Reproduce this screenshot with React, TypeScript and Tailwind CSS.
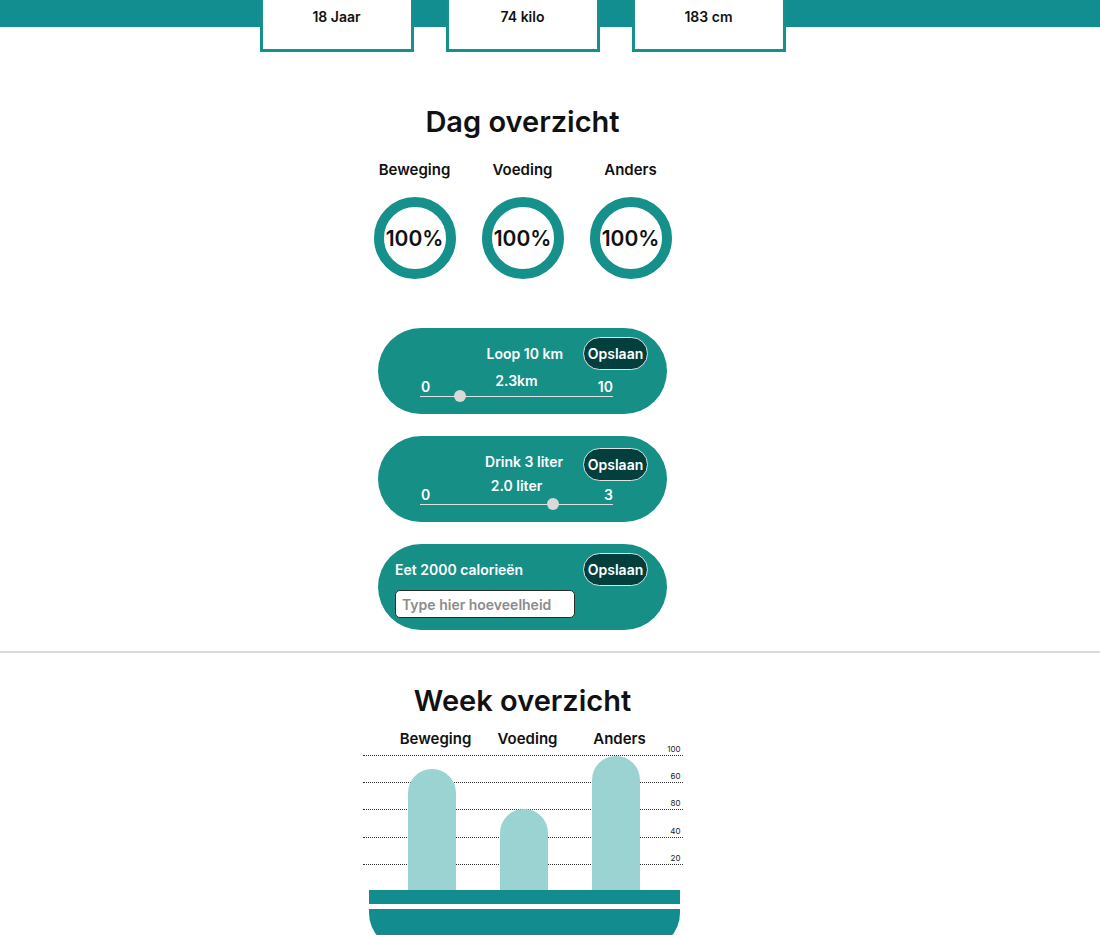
import React from "react";

const font = { fontFamily: "Inter, 'Noto Sans', sans-serif" };

function StatBox({ label }: { label: string }) {
  return (
    <div className="flex h-[52px] w-[154px] justify-center border-x-[3px] border-b-[3px] border-[#16908f] bg-white pt-[7px] text-sm leading-5 font-semibold text-[#111]">
      {label}
    </div>
  );
}

function Ring({ label }: { label: string }) {
  return (
    <div className="flex w-[82px] flex-col items-center">
      <div className="text-[15px] leading-5 font-semibold whitespace-nowrap text-[#111]">{label}</div>
      <div className="mt-[17px] flex h-[82px] w-[82px] items-center justify-center rounded-full border-[10px] border-[#16908a]">
        <span className="text-[21px] leading-none font-semibold text-[#111]">100%</span>
      </div>
    </div>
  );
}

function SaveButton() {
  return (
    <button className="flex h-[33px] w-[65px] shrink-0 items-center justify-center rounded-full border border-[#d8e6e4] bg-[#033f3d] text-sm font-semibold text-white">
      Opslaan
    </button>
  );
}

function SliderCard({
  title,
  value,
  max,
  frac,
  pt,
  titleShift,
  valueGap,
  rowGap,
}: {
  title: string;
  value: string;
  max: string;
  frac: number;
  pt: string;
  titleShift: string;
  valueGap: string;
  rowGap: string;
}) {
  return (
    <div className={`h-[86px] w-[289px] rounded-full bg-[#168f87] pr-[19px] pl-[42px] text-white ${pt}`}>
      <div className="flex items-center justify-end gap-5">
        <span className={`text-sm font-semibold whitespace-nowrap ${titleShift}`}>{title}</span>
        <SaveButton />
      </div>
      <div className={`w-[193px] ${valueGap}`}>
        <div className="text-center text-sm leading-[18px] font-semibold">{value}</div>
        <div className={`flex justify-between text-sm leading-[18px] font-semibold ${rowGap}`}>
          <span className="pl-[1px]">0</span>
          <span>{max}</span>
        </div>
        <div className="relative h-px bg-[#d9e3e1]">
          <div
            className="absolute top-[-6px] h-[12px] w-[12px] -translate-x-1/2 rounded-full bg-[#d9d9d9]"
            style={{ left: `${frac * 100}%` }}
          />
        </div>
      </div>
    </div>
  );
}

function InputCard() {
  return (
    <div className="h-[86px] w-[289px] rounded-full bg-[#168f87] pt-[9px] pr-[19px] pl-[17px] text-white">
      <div className="flex items-center justify-between">
        <span className="text-sm font-semibold">Eet 2000 calorieën</span>
        <SaveButton />
      </div>
      <input
        className="mt-[4px] h-[28px] w-[180px] rounded-[5px] border border-[#2b2b2b] bg-white px-[6px] text-sm font-semibold text-[#111] placeholder:text-[#8c8c8c]"
        style={font}
        placeholder="Type hier hoeveelheid"
      />
    </div>
  );
}

const gridLines = [
  { label: "100", top: "top-[6px]" },
  { label: "60", top: "top-[33px]" },
  { label: "80", top: "top-[60px]" },
  { label: "40", top: "top-[88px]" },
  { label: "20", top: "top-[115px]" },
];

const bars = [
  { label: "Beweging", h: "h-[121px]" },
  { label: "Voeding", h: "h-[81px]" },
  { label: "Anders", h: "h-[134px]" },
];

export default function App() {
  return (
    <div className="min-h-[935px] bg-white" style={font}>
      {/* Header */}
      <div className="h-[27px] bg-[#128e91]" />
      <div className="-mt-[27px] pr-[55px]">
        <div className="flex justify-center gap-8">
          <StatBox label="18 Jaar" />
          <StatBox label="74 kilo" />
          <StatBox label="183 cm" />
        </div>

        {/* Dag overzicht */}
        <h1 className="mt-[53px] text-center text-[29px] leading-[34px] font-semibold text-[#111]">Dag overzicht</h1>
        <div className="mt-[21px] flex justify-center gap-[26px]">
          <Ring label="Beweging" />
          <Ring label="Voeding" />
          <Ring label="Anders" />
        </div>

        <div className="mt-[49px] flex flex-col items-center gap-[22px]">
          <SliderCard
            title="Loop 10 km"
            value="2.3km"
            max="10"
            frac={0.207}
            pt="pt-[9px]"
            titleShift=""
            valueGap="mt-[2px]"
            rowGap="-mt-[12px]"
          />
          <SliderCard
            title="Drink 3 liter"
            value="2.0 liter"
            max="3"
            frac={0.69}
            pt="pt-[12px]"
            titleShift="-translate-y-[3px]"
            valueGap="-mt-[4px]"
            rowGap="-mt-[9px]"
          />
          <InputCard />
        </div>
      </div>

      <div className="mt-[21px] h-[2px] bg-[#dadada]" />

      {/* Week overzicht */}
      <div className="pr-[55px]">
        <h2 className="mt-[31px] text-center text-[29px] leading-[34px] font-semibold text-[#111]">Week overzicht</h2>
        <div className="mx-auto mt-[11px] w-[320px]">
          <div className="flex gap-[44px] pl-[49px]">
            {bars.map((b) => (
              <div key={b.label} className="flex w-[48px] justify-center">
                <span className="text-[15px] leading-5 font-semibold whitespace-nowrap text-[#111]">{b.label}</span>
              </div>
            ))}
          </div>
          <div className="relative h-[141px]">
            {gridLines.map((g) => (
              <div key={g.label} className={`absolute inset-x-0 ${g.top} border-t border-dotted border-[#333]`}>
                <span className="absolute right-[2px] -top-[12px] text-[8px] leading-[10px] text-[#222]">{g.label}</span>
              </div>
            ))}
            <div className="relative flex h-full items-end gap-[44px] pl-[45px]">
              {bars.map((b) => (
                <div key={b.label} className={`w-[48px] ${b.h} rounded-t-full bg-[#9bd3d2]`} />
              ))}
            </div>
          </div>
          <div className="ml-[6px] h-[14px] w-[311px] bg-[#128c8f]" />
          <div className="mt-[5px] ml-[6px] h-[40px] w-[311px] rounded-b-[36px] bg-[#128c8f]" />
        </div>
      </div>
    </div>
  );
}
